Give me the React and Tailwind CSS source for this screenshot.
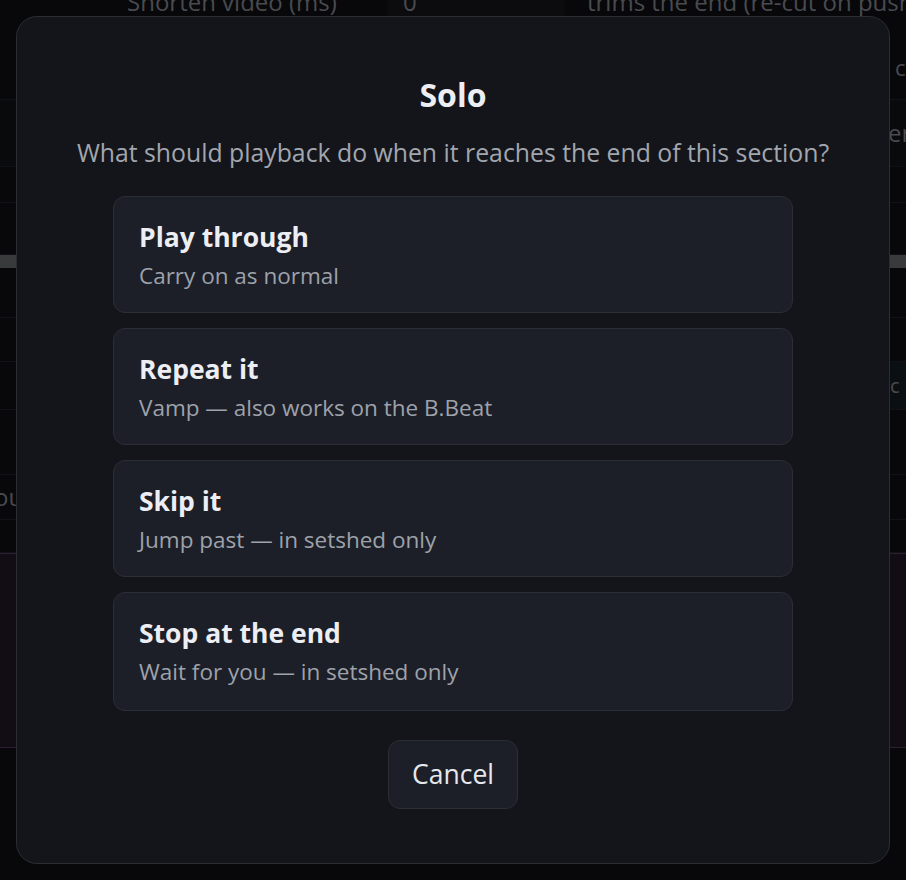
import React from 'react';

// Background page (partly visible behind the dialog)
function BackgroundPage() {
  return (
    <div className="min-h-[880px] bg-[#0a0b0d] text-[#5b5e63] overflow-hidden" style={{ fontFamily: '"Open Sans", "Noto Sans", sans-serif' }}>
      {/* top settings row, scrolled mostly out of view */}
      <div className="h-4 overflow-hidden">
        <div className="flex items-center -mt-[14px] h-[32px] text-[24px]">
          <div className="w-[387px] shrink-0 pl-[127px] leading-[32px] whitespace-nowrap">Shorten video (ms)</div>
          <div className="w-[178px] shrink-0 h-[32px] bg-[#0f1013] pl-4 leading-[32px]">0</div>
          <div className="pl-[22px] shrink-0 leading-[32px] whitespace-nowrap">trims the end (re-cut on push/save)</div>
        </div>
      </div>
      <div className="h-[84px] border-b border-[#16171b] flex items-start pt-[36px]">
        <div className="ml-[895px] text-[22px] leading-[30px]">c</div>
      </div>
      <div className="h-[67px] bg-[#0c0d10] border-b border-[#16171b] flex items-center">
        <div className="ml-[888px] text-[24px] whitespace-nowrap">er</div>
      </div>
      <div className="h-[36px] border-b border-[#16171b]" />
      <div className="h-[52px] border-b border-[#16171b]" />
      <div className="h-[13px] bg-[#48494c]" />
      <div className="h-[50px] border-b border-[#16171b]" />
      <div className="h-[44px] border-b border-[#16171b]" />
      <div className="h-[48px] border-b border-[#16171b] flex">
        <div className="flex-1" />
        <div className="w-[16px] bg-[#0d1319] flex items-center text-[20px]">c</div>
      </div>
      <div className="h-[65px] border-b border-[#16171b]" />
      <div className="h-[45px] border-b border-[#16171b] flex items-center">
        <div className="-ml-[6px] text-[24px]">ou</div>
      </div>
      <div className="h-[33px] border-b border-[#16171b]" />
      <div className="h-[195px] bg-[#170f1b] border-y border-[#3a2742]" />
      <div className="h-[132px]" />
    </div>
  );
}

const OPTIONS = [
  { title: 'Play through', desc: 'Carry on as normal' },
  { title: 'Repeat it', desc: 'Vamp — also works on the B.Beat' },
  { title: 'Skip it', desc: 'Jump past — in setshed only' },
  { title: 'Stop at the end', desc: 'Wait for you — in setshed only' },
];

export default function App() {
  return (
    <div className="relative">
      <BackgroundPage />

      {/* Dialog */}
      <div className="fixed inset-0 bg-black/20">
        <div
          className="absolute inset-4 rounded-[21px] border border-[#2a2d35] bg-[#13151b] flex flex-col items-center pt-[58px]"
          style={{ fontFamily: '"Open Sans", "Noto Sans", sans-serif' }}
        >
          <h2 className="text-[32px] leading-[40px] font-bold text-[#eceef4]">Solo</h2>
          <p className="mt-[21px] text-[24.8px] leading-[32px] text-[#a2a6ae] whitespace-nowrap">
            What should playback do when it reaches the end of this section?
          </p>

          <div className="mt-[28px] w-[680px] flex flex-col gap-[15px]">
            {OPTIONS.map((o, i) => (
              <button
                key={o.title}
                type="button"
                className={`${i === OPTIONS.length - 1 ? 'h-[119px]' : 'h-[117px]'} flex flex-col items-start justify-start text-left rounded-[12px] border border-[#2b2e37] bg-[#1c1f27] pl-[25px] pt-[21px] cursor-pointer`}
              >
                <div className="text-[26.5px] leading-[38px] font-bold text-[#eceef4] whitespace-nowrap">{o.title}</div>
                <div className="mt-[4px] text-[22.5px] leading-[32px] text-[#9ea2ab] whitespace-nowrap">{o.desc}</div>
              </button>
            ))}
          </div>

          <button
            type="button"
            className="mt-[29px] h-[69px] px-[23px] rounded-[12px] border border-[#2b2e37] bg-[#1c1f27] text-[26.5px] text-[#e6e8ee] cursor-pointer"
          >
            Cancel
          </button>
        </div>
      </div>
    </div>
  );
}
